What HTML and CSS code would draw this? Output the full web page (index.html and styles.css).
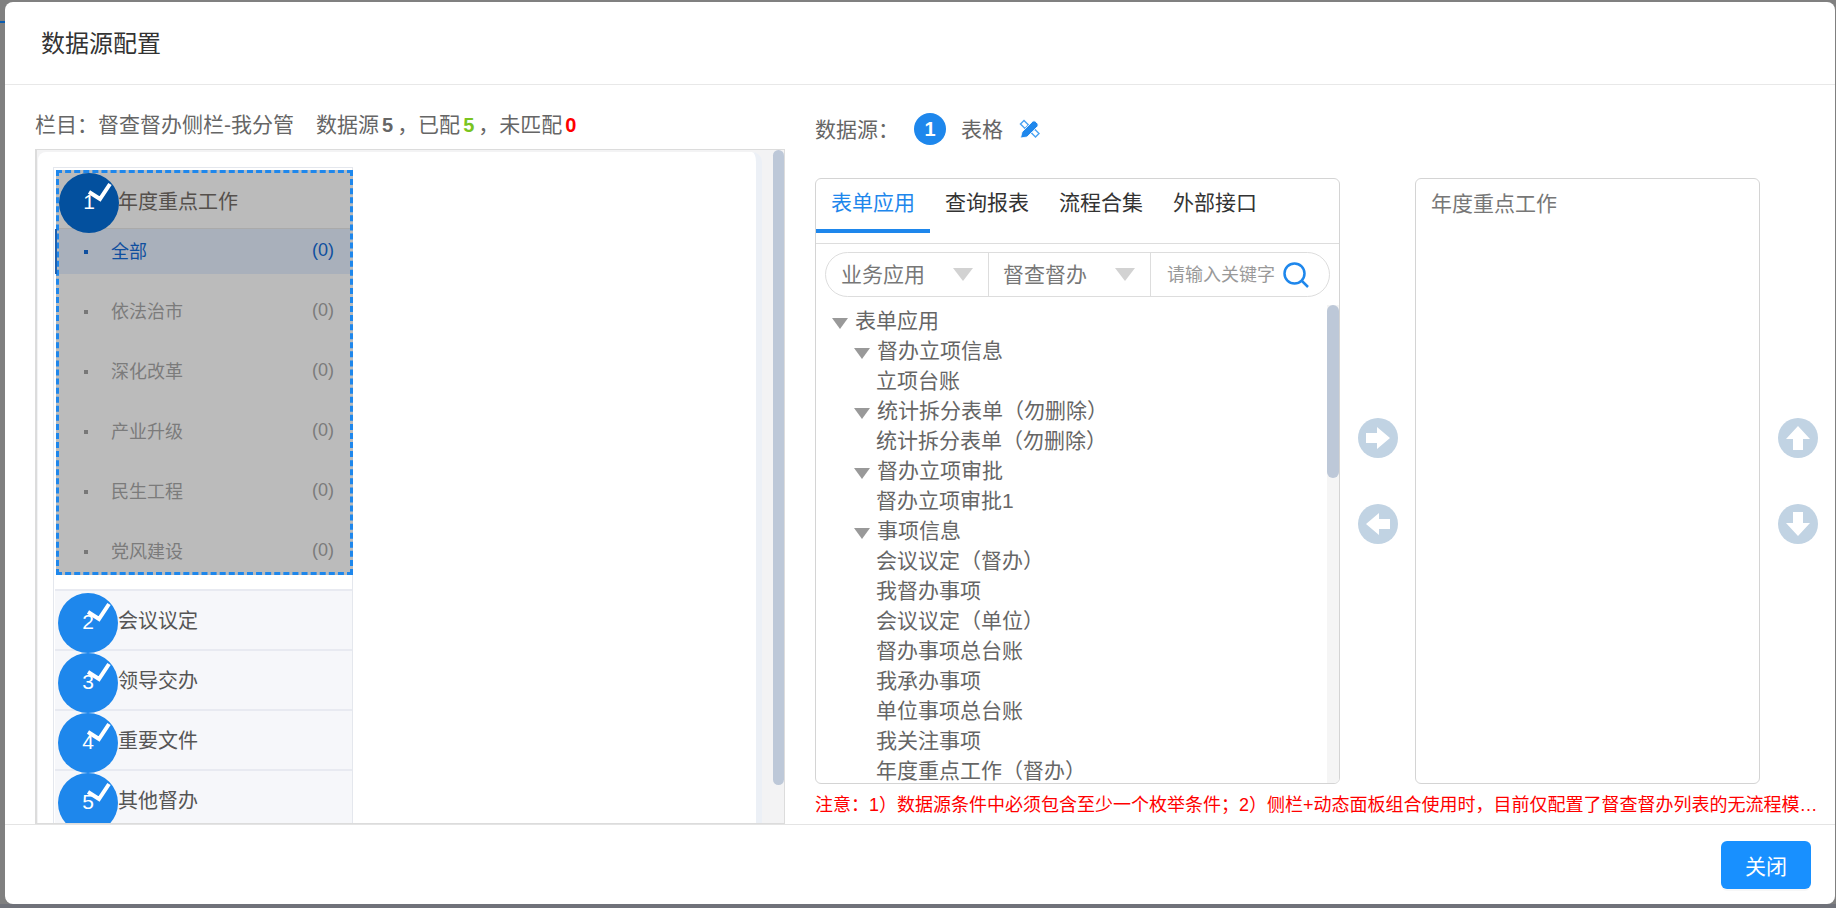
FILE: index.html
```html
<!DOCTYPE html>
<html lang="zh-CN">
<head>
<meta charset="utf-8">
<title>数据源配置</title>
<link rel="stylesheet" href="styles.css">
</head>
<body>
<div class="backdrop-mark"></div>
<div class="modal">
  <header class="modal-head">数据源配置</header>
  <main class="modal-body">
    <section class="left">
      <div class="info">栏目&#xFF1A;督查督办侧栏-我分管<span class="info-gap"></span>数据源<b class="num">5</b>&#xFF0C;已配<b class="num green">5</b>&#xFF0C;未匹配<b class="num red">0</b></div>
      <div class="panel">
        <div class="card">
          <div class="column">
            <div class="group">
              <div class="group-head">
                <span class="badge dark">1<svg class="tick" viewBox="0 0 60 60"><polyline points="30,19 41,26 51,11"/></svg></span>
                <span>年度重点工作</span>
              </div>
              <div class="sub active"><i></i><span>全部</span><em>(0)</em></div>
              <div class="sub"><i></i><span>依法治市</span><em>(0)</em></div>
              <div class="sub"><i></i><span>深化改革</span><em>(0)</em></div>
              <div class="sub"><i></i><span>产业升级</span><em>(0)</em></div>
              <div class="sub"><i></i><span>民生工程</span><em>(0)</em></div>
              <div class="sub"><i></i><span>党风建设</span><em>(0)</em></div>
            </div>
            <div class="cat"><span class="badge">2<svg class="tick" viewBox="0 0 60 60"><polyline points="30,19 41,26 51,11"/></svg></span><span>会议议定</span></div>
            <div class="cat"><span class="badge">3<svg class="tick" viewBox="0 0 60 60"><polyline points="30,19 41,26 51,11"/></svg></span><span>领导交办</span></div>
            <div class="cat"><span class="badge">4<svg class="tick" viewBox="0 0 60 60"><polyline points="30,19 41,26 51,11"/></svg></span><span>重要文件</span></div>
            <div class="cat"><span class="badge">5<svg class="tick" viewBox="0 0 60 60"><polyline points="30,19 41,26 51,11"/></svg></span><span>其他督办</span></div>
          </div>
        </div>
        <div class="panel-bar"><div class="panel-thumb"></div></div>
      </div>
    </section>
    <section class="right">
      <div class="source">
        <span class="source-text">数据源&#xFF1A;</span>
        <span class="source-no">1</span>
        <span class="source-text">表格</span>
        <svg class="edit" viewBox="0 0 21 20">
          <g class="edit-ruler"><path d="M1.500 5 5 1.500 9.500 6 6 9.500Z"/><path d="M12 13.500 15.500 10 20 14.500 16.500 18Z"/></g>
          <path class="edit-pencil" d="M1.500 19 3 13 13.500 2.500Q15 1 16.500 2.500L18.500 4.500Q20 6 18.500 7.500L8 18Z"/>
        </svg>
      </div>
      <div class="work">
        <div class="picker">
          <div class="tabs">
            <div class="tab on">表单应用</div>
            <div class="tab">查询报表</div>
            <div class="tab">流程合集</div>
            <div class="tab">外部接口</div>
          </div>
          <div class="search">
            <div class="seg"><span>业务应用</span><i class="seg-arrow"></i></div>
            <div class="seg"><span>督查督办</span><i class="seg-arrow"></i></div>
            <div class="seg-input">
              <span>请输入关键字</span>
              <svg class="lens" viewBox="0 0 26 26"><circle cx="11.500" cy="11.500" r="10"/><path d="M19 19 25 25"/></svg>
            </div>
          </div>
          <div class="tree-wrap">
            <ul class="tree">
              <li class="l1"><i class="caret"></i>表单应用</li>
              <li class="l2"><i class="caret"></i>督办立项信息</li>
              <li class="leaf">立项台账</li>
              <li class="l2"><i class="caret"></i>统计拆分表单&#xFF08;勿删除&#xFF09;</li>
              <li class="leaf">统计拆分表单&#xFF08;勿删除&#xFF09;</li>
              <li class="l2"><i class="caret"></i>督办立项审批</li>
              <li class="leaf">督办立项审批1</li>
              <li class="l2"><i class="caret"></i>事项信息</li>
              <li class="leaf">会议议定&#xFF08;督办&#xFF09;</li>
              <li class="leaf">我督办事项</li>
              <li class="leaf">会议议定&#xFF08;单位&#xFF09;</li>
              <li class="leaf">督办事项总台账</li>
              <li class="leaf">我承办事项</li>
              <li class="leaf">单位事项总台账</li>
              <li class="leaf">我关注事项</li>
              <li class="leaf">年度重点工作&#xFF08;督办&#xFF09;</li>
            </ul>
            <div class="tree-bar"><div class="tree-thumb"></div></div>
          </div>
        </div>
        <div class="ops">
          <svg viewBox="0 0 40 40"><circle cx="20" cy="20" r="20"/><polygon points="8,15 19,15 19,9 32,20 19,31 19,25 8,25"/></svg>
          <svg viewBox="0 0 40 40"><circle cx="20" cy="20" r="20"/><polygon points="32,15 21,15 21,9 8,20 21,31 21,25 32,25"/></svg>
        </div>
        <div class="chosen">年度重点工作</div>
        <div class="ops">
          <svg viewBox="0 0 40 40"><circle cx="20" cy="20" r="20"/><polygon points="20,8 32,21 25,21 25,32 15,32 15,21 8,21"/></svg>
          <svg viewBox="0 0 40 40"><circle cx="20" cy="20" r="20"/><polygon points="20,32 32,19 25,19 25,8 15,8 15,19 8,19"/></svg>
        </div>
      </div>
      <div class="note">注意&#xFF1A;1&#xFF09;数据源条件中必须包含至少一个枚举条件&#xFF1B;2&#xFF09;侧栏+动态面板组合使用时&#xFF0C;目前仅配置了督查督办列表的无流程模板&#xFF0C;其他列表暂不支持</div>
    </section>
  </main>
  <footer class="modal-foot"><button class="close-btn">关闭</button></footer>
</div>
</body>
</html>
```
FILE: styles.css
```css
* { box-sizing: border-box; }
html, body { margin: 0; height: 908px; overflow: hidden; }
body {
  position: relative;
  padding: 2px 1px 4px 5px;
  background: linear-gradient(to bottom, #808080 904px, #70727a 904px);
  font-family: "Liberation Sans", "Noto Sans CJK SC", sans-serif;
  color: #666;
  font-size: 21px;
}
.backdrop-mark { position: absolute; left: 0; top: 21px; width: 5px; height: 2px; background: #0a5cb0; }

.modal { width: 1830px; height: 902px; background: #fff; border-radius: 8px; display: flex; flex-direction: column; overflow: hidden; }
.modal-head { height: 83px; flex: none; padding: 0 0 3px 36px; display: flex; align-items: center; font-size: 24px; color: #333; border-bottom: 1px solid #e8e8e8; }
.modal-body { flex: 1; min-height: 0; display: flex; gap: 30px; padding-left: 30px; padding-right: 16px; }
.modal-foot { flex: none; height: 80px; border-top: 1px solid #e4e4e4; padding: 16px 24px 0 0; display: flex; justify-content: flex-end; align-items: flex-start; }
.close-btn { width: 90px; height: 48px; border: 0; border-radius: 6px; background: #1890ff; color: #fff; font: inherit; box-shadow: 0 2px 0 rgba(0, 0, 0, .03); }

/* left */
.left { width: 750px; flex: none; display: flex; flex-direction: column; }
.info { height: 64px; flex: none; padding-top: 25px; line-height: 30px; white-space: nowrap; display: flex; }
.info-gap { width: 22px; }
.num { margin: 0 4px 0 3px; font-size: 20px; font-weight: 700; color: #666; }
.green { color: #7ac41f; }
.red { color: #f00; }

.panel { flex: 1; min-height: 0; border: 1px solid #dcdcdc; border-left-width: 2px; background: #f3f3f4; display: flex; overflow: hidden; padding-left: 1px; }
.card { width: 724px; flex: none; background: #fff; border-right: 6px solid #ecf0f6; border-top-left-radius: 8px; border-top-right-radius: 10px; margin-top: 2px; padding: 15px 0 0 15px; }
.panel-bar { flex: 1; display: flex; justify-content: flex-end; }
.panel-thumb { width: 11px; height: 635px; border-radius: 6px; background: #bdc8d8; }

.column { width: 300px; border: 1px solid #e4e7ed; border-bottom: 0; padding-top: 2px; }
.group { width: 297px; height: 405px; margin-left: 2px; border: 3px dashed #1e87ec; background: #bbb; overflow: visible; }
.group-head { position: relative; height: 56px; display: flex; align-items: center; padding: 0 0 0 59px; color: #55504c; font-size: 20px; border-bottom: 1px solid #aaa; }
.sub { position: relative; height: 45px; margin-bottom: 15px; padding: 0 16px 0 25px; display: flex; align-items: center; font-size: 18px; color: #7b7b7b; }
.sub:last-child { margin-bottom: 0; }
.sub i { width: 4px; height: 4px; background: #777; margin-right: 23px; }
.sub span { margin-top: -4px; }
.sub em { margin-left: auto; margin-top: -2px; font-style: normal; }
.active { background: #a9b0bb; color: #0f4f9f; }
.active i { background: #0f4f9f; }
.active::before { content: ""; position: absolute; left: -4px; top: 0; bottom: 0; width: 2px; background: #1e60b0; }

.cat { position: relative; height: 60px; margin: 0 0 0 1px; padding-left: 63px; display: flex; align-items: center; font-size: 20px; color: #555; background: #f6f7fa; border-top: 2px solid #e8eaf1; }
.group + .cat { margin-top: 14px; }
.cat span:last-child { margin-top: -2px; }

.badge { position: absolute; left: 0; top: 0; width: 60px; height: 60px; padding-bottom: 2px; border-radius: 50%; background: #1e87ec; color: #fff; font-size: 21px; display: flex; align-items: center; justify-content: center; z-index: 1; }
.cat .badge { left: 3px; top: 2px; margin-top: 0; }
.badge.dark { background: #03509e; }
.tick { position: absolute; left: 0; top: 0; width: 60px; height: 60px; fill: none; stroke: #fff; stroke-width: 4; }

/* right */
.right { flex: 1; min-width: 0; display: flex; flex-direction: column; }
.source { height: 93px; flex: none; padding: 28px 0 33px; display: flex; align-items: center; gap: 15px; }
.source-text { margin-top: -3px; }
.source-no { width: 32px; height: 32px; border-radius: 50%; background: #1e87ec; color: #fff; font-size: 20px; font-weight: 700; display: flex; align-items: center; justify-content: center; }
.edit { width: 21px; height: 20px; margin-left: 1px; }
.edit-ruler { fill: none; stroke: #4ba3f2; stroke-width: 1.500; }
.edit-pencil { fill: #1e87ec; stroke: #fff; stroke-width: .8; }

.work { height: 606px; flex: none; display: flex; }
.picker { width: 525px; flex: none; border: 1px solid #d4d4d4; border-radius: 6px; display: flex; flex-direction: column; overflow: hidden; }
.tabs { flex: none; height: 65px; display: flex; border-bottom: 1px solid #ddd; padding: 0 0 10px 0; color: #333; }
.tab { width: 114px; height: 54px; line-height: 48px; text-align: center; }
.tab.on { color: #1e87ec; border-bottom: 4px solid #1e87ec; }

.search { flex: none; height: 45px; margin: 8px 9px; border: 1px solid #ddd; border-radius: 23px; display: flex; align-items: stretch; color: #777; }
.seg { width: 162px; padding: 0 15px; border-right: 1px solid #ddd; display: flex; align-items: center; justify-content: space-between; }
.seg:first-child { width: 163px; }
.seg + .seg { padding-left: 14px; }
.seg span { margin-top: -3px; }
.seg-arrow { width: 0; height: 0; border-left: 10px solid transparent; border-right: 10px solid transparent; border-top: 13px solid #d2d2d2; }
.seg-input { flex: 1; padding: 0 20px 0 16px; display: flex; align-items: center; justify-content: space-between; font-size: 18px; color: #999; }
.seg-input span { margin-top: -3px; }
.lens { width: 26px; height: 26px; fill: none; stroke: #1e87ec; stroke-width: 2.500; }

.tree-wrap { flex: 1; min-height: 0; display: flex; overflow: hidden; }
.tree { flex: 1; list-style: none; margin: 0; padding: 0; }
.tree li { height: 30px; padding-bottom: 2px; display: flex; align-items: center; white-space: nowrap; }
.l1 { padding-left: 16px; }
.l2 { padding-left: 38px; }
.leaf { padding-left: 60px; }
.caret { width: 0; height: 0; margin-right: 7px; margin-top: 9px; border-left: 8px solid transparent; border-right: 8px solid transparent; border-top: 11px solid #999; }
.tree-bar { width: 12px; background: #f5f5f5; }
.tree-thumb { height: 173px; border-radius: 6px; background: #bdc8d8; }

.ops { width: 75px; flex: none; display: flex; flex-direction: column; align-items: center; justify-content: center; gap: 46px; }
.ops svg { width: 40px; height: 40px; }
.ops circle { fill: #c1d3e3; }
.ops polygon { fill: #fff; }
.chosen { width: 345px; flex: none; border: 1px solid #d4d4d4; border-radius: 6px; padding: 10px 15px; line-height: 30px; color: #777; }

.note { flex: 1; line-height: 42px; font-size: 18px; color: #f00; white-space: nowrap; overflow: hidden; text-overflow: ellipsis; }
```
